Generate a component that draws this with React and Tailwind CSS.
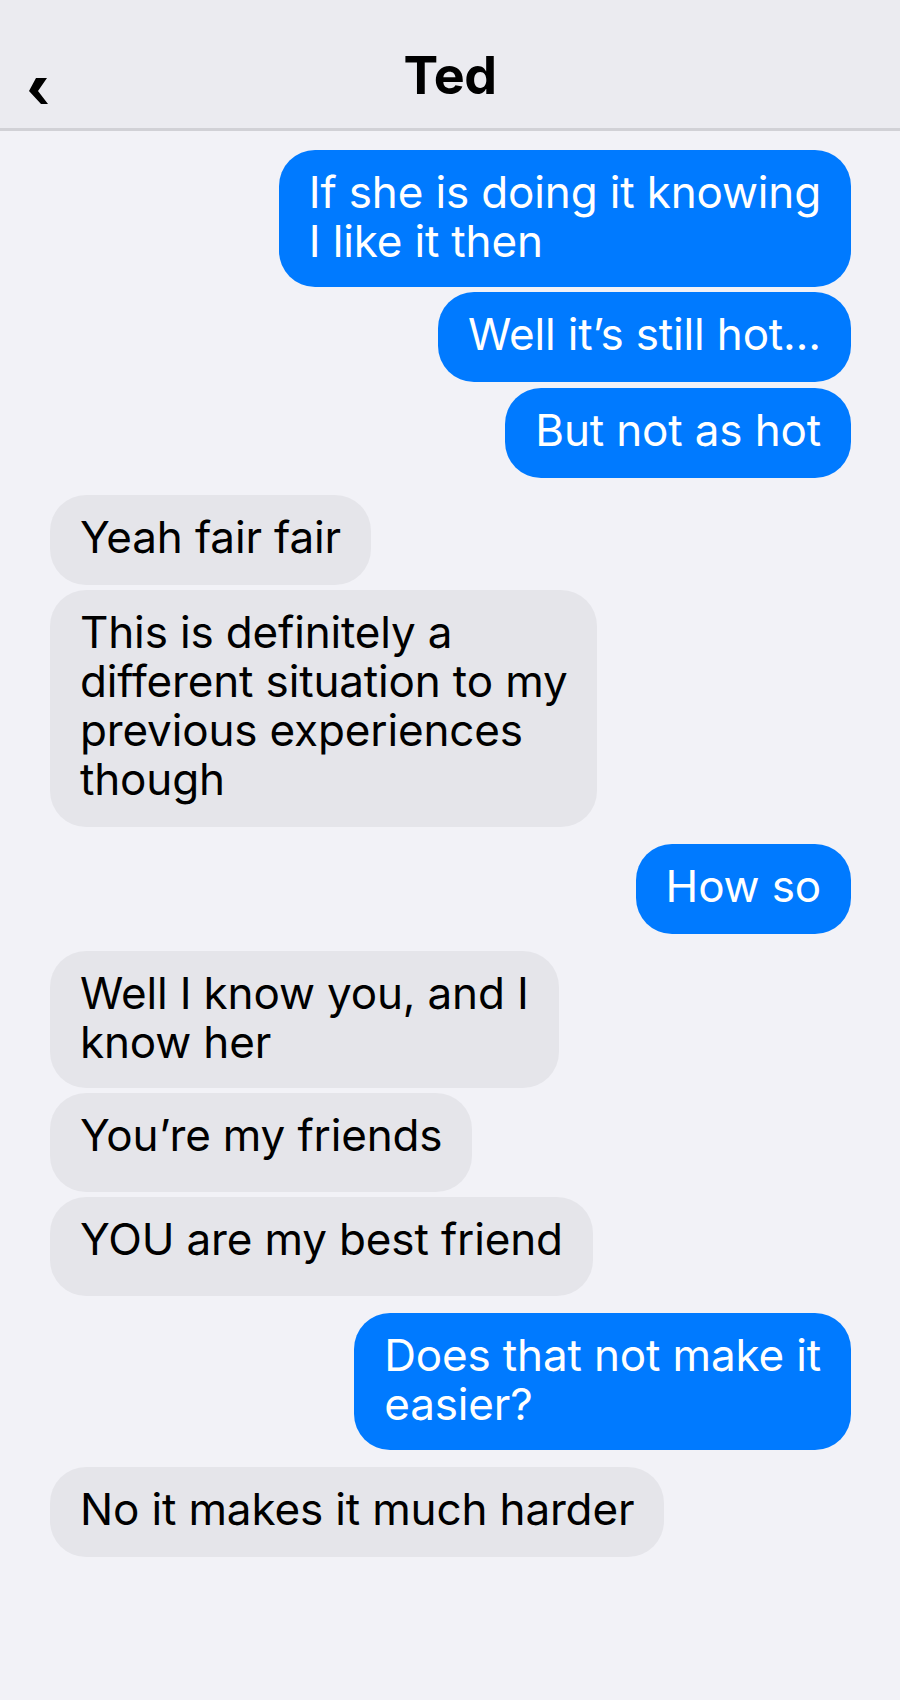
import React from "react";

const font = { fontFamily: "Inter, 'Noto Sans', sans-serif" };

function Bubble({ me, lines, pb = "pb-[23px]", className = "" }) {
  return (
    <div
      className={
        "whitespace-nowrap rounded-[36px] px-[30px] pt-[18px] text-[44px] leading-[49px] tracking-[-0.15px] " +
        pb +
        " " +
        (me ? "bg-[#007AFF] text-white self-end " : "bg-[#E5E5EA] text-black self-start ") +
        className
      }
    >
      {lines.map((l, i) => (
        <div key={i}>{l}</div>
      ))}
    </div>
  );
}

export default function App() {
  return (
    <div className="w-[900px] h-[1700px] bg-[#F2F2F7] flex flex-col" style={font}>
      <header className="h-[131px] bg-[#EBEBF0] border-b-[3px] border-[#D1D1D6] grid grid-cols-[1fr_auto_1fr] shrink-0">
        <div className="pl-[29px] pt-[78px]">
          <svg width="20" height="26" viewBox="0 0 20 26">
            <polygon points="7,0 18,0 9,13 19,26 12,26 0,13" fill="#000" />
          </svg>
        </div>
        <div className="pt-[50px] text-[52px] leading-[52px] font-bold text-black tracking-[-0.5px]">Ted</div>
        <div />
      </header>
      <main className="flex flex-col pl-[50px] pr-[49px] pt-[19px]">
        <Bubble me pb="pb-[21px]" lines={["If she is doing it knowing", "I like it then"]} />
        <Bubble me className="mt-[5px]" lines={["Well it’s still hot…"]} />
        <Bubble me className="mt-[6px]" lines={["But not as hot"]} />
        <Bubble className="mt-[17px]" lines={["Yeah fair fair"]} />
        <Bubble
          className="mt-[5px]"
          lines={["This is definitely a", "different situation to my", "previous experiences", "though"]}
        />
        <Bubble me className="mt-[17px]" lines={["How so"]} />
        <Bubble className="mt-[17px]" pb="pb-[21px]" lines={["Well I know you, and I", "know her"]} />
        <Bubble pb="pb-[32px]" className="mt-[5px]" lines={["You’re my friends"]} />
        <Bubble pb="pb-[32px]" className="mt-[5px]" lines={["YOU are my best friend"]} />
        <Bubble me className="mt-[17px]" pb="pb-[21px]" lines={["Does that not make it", "easier?"]} />
        <Bubble className="mt-[17px]" lines={["No it makes it much harder"]} />
      </main>
    </div>
  );
}
